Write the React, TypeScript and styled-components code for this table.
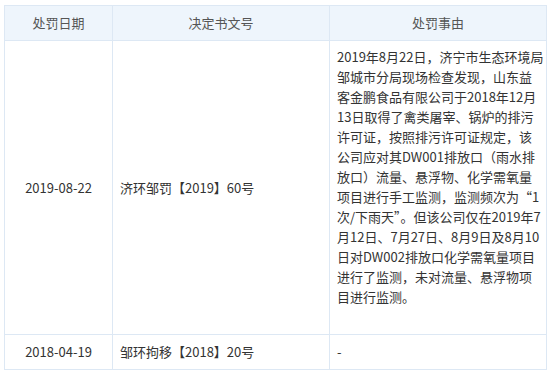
import React from "react";
import styled, { createGlobalStyle } from "styled-components";

const GlobalStyle = createGlobalStyle`
  html, body {
    margin: 0;
    padding: 0;
    background: #ffffff;
  }
  body {
    font-family: "Noto Sans CJK SC", "Liberation Sans", sans-serif;
  }
`;

const Wrapper = styled.div`
  padding: 5px 0 0 4px;
`;

const Table = styled.table`
  width: 542px;
  border-collapse: collapse;
  table-layout: fixed;
  font-size: 13px;
  color: #333333;
`;

const Col = styled.col<{ $w: number }>`
  width: ${(p) => p.$w}px;
`;

const HeadCell = styled.th`
  box-sizing: border-box;
  height: 35px;
  padding: 0 7px;
  background: #eef5fc;
  border: 1px solid #dde8f4;
  font-weight: normal;
  color: #555555;
  text-align: center;
  vertical-align: middle;
  line-height: 20px;
`;

const Cell = styled.td<{ $align?: string }>`
  box-sizing: border-box;
  height: 35px;
  padding: 0 7px;
  border: 1px solid #dde8f4;
  text-align: ${(p) => p.$align || "left"};
  vertical-align: middle;
  line-height: 20px;
  white-space: nowrap;
`;

const ReasonCell = styled(Cell)`
  padding: 6px 7px 27px;
`;

const Line = styled.span`
  display: block;
  white-space: nowrap;
`;

const reasonLines = [
  "2019年8月22日，济宁市生态环境局",
  "邹城市分局现场检查发现，山东益",
  "客金鹏食品有限公司于2018年12月",
  "13日取得了禽类屠宰、锅炉的排污",
  "许可证，按照排污许可证规定，该",
  "公司应对其DW001排放口（雨水排",
  "放口）流量、悬浮物、化学需氧量",
  "项目进行手工监测，监测频次为“1",
  "次/下雨天”。但该公司仅在2019年7",
  "月12日、7月27日、8月9日及8月10",
  "日对DW002排放口化学需氧量项目",
  "进行了监测，未对流量、悬浮物项",
  "目进行监测。",
];

const rows = [
  { date: "2019-08-22", doc: "济环邹罚【2019】60号", reason: reasonLines },
  { date: "2018-04-19", doc: "邹环拘移【2018】20号", reason: ["-"] },
];

export default function App() {
  return (
    <>
      <GlobalStyle />
      <Wrapper>
        <Table>
          <colgroup>
            <Col $w={108} />
            <Col $w={217} />
            <Col $w={217} />
          </colgroup>
          <thead>
            <tr>
              <HeadCell>处罚日期</HeadCell>
              <HeadCell>决定书文号</HeadCell>
              <HeadCell>处罚事由</HeadCell>
            </tr>
          </thead>
          <tbody>
            {rows.map((r) => (
              <tr key={r.date}>
                <Cell $align="center">{r.date}</Cell>
                <Cell>{r.doc}</Cell>
                {r.reason.length > 1 ? (
                  <ReasonCell>
                    {r.reason.map((l, i) => (
                      <Line key={i}>{l}</Line>
                    ))}
                  </ReasonCell>
                ) : (
                  <Cell>{r.reason[0]}</Cell>
                )}
              </tr>
            ))}
          </tbody>
        </Table>
      </Wrapper>
    </>
  );
}
